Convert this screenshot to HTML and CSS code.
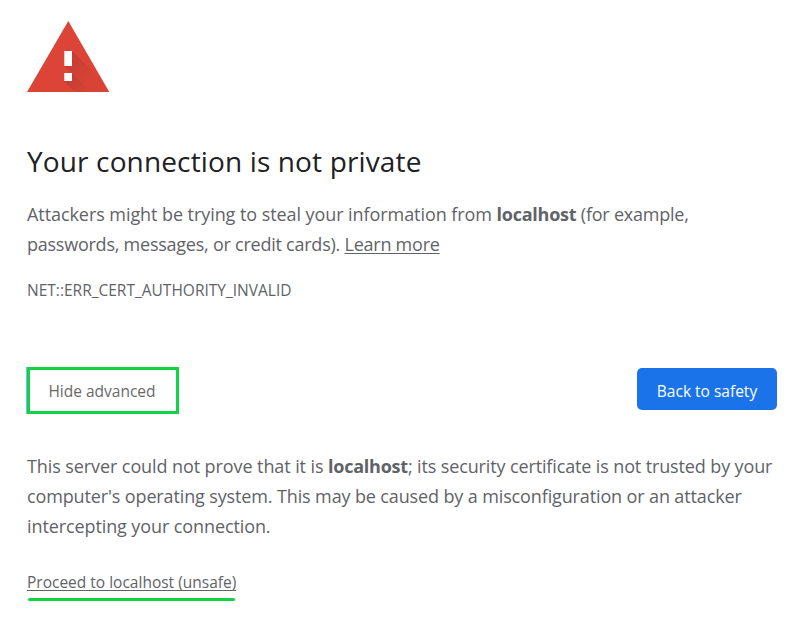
FILE: index.html
```html
<!DOCTYPE html>
<html lang="en">
<head>
<meta charset="utf-8">
<title>Privacy error</title>
<link rel="stylesheet" href="styles.css">
</head>
<body>
<main class="page">
  <svg class="warning-icon" width="84" height="72" viewBox="0 0 84 72" aria-hidden="true">
    <defs>
      <linearGradient id="shade" x1="42" y1="36" x2="66" y2="60" gradientUnits="userSpaceOnUse">
        <stop offset="0" stop-color="#b93a30" stop-opacity=".7"/>
        <stop offset="1" stop-color="#c53b30" stop-opacity=".1"/>
      </linearGradient>
      <linearGradient id="shade-dot" x1="41" y1="56" x2="58" y2="73" gradientUnits="userSpaceOnUse">
        <stop offset="0" stop-color="#b93a30" stop-opacity=".8"/>
        <stop offset="1" stop-color="#c53b30" stop-opacity=".2"/>
      </linearGradient>
      <clipPath id="tri"><path d="M41.300 0 82.300 71H0z"/></clipPath>
    </defs>
    <path fill="#db4437" d="M41.300 0 82.300 71H0z"/>
    <g clip-path="url(#tri)">
      <path fill="url(#shade)" d="M45 30 86 71H64L37 45z"/>
      <path fill="url(#shade-dot)" d="M45 52 64 71H48L37 60z"/>
    </g>
    <path fill="#fff" d="M37.300 30h7.700v15h-7.700zM37.300 52h7.700v8h-7.700z"/>
  </svg>
  <h1 class="title">Your connection is not private</h1>
  <p class="text intro"><span class="l1">Attackers might be trying to steal your information from <strong>localhost</strong><span class="l1-end"> (for example,</span></span><br><span class="l2">passwords, messages, or credit cards). <a class="link" href="#">Learn more</a></span></p>
  <p class="code">NET::ERR_CERT_AUTHORITY_INVALID</p>
  <div class="actions">
    <button class="btn details">Hide advanced</button>
    <button class="btn primary">Back to safety</button>
  </div>
  <p class="text more"><span class="l3">This server could not prove that it is <strong>localhost</strong><span class="l3-end">; its security certificate is not trusted by your</span></span><br><span class="l4">computer's operating system. This may be caused by a misconfiguration or an attacker</span><br><span class="l5">intercepting your connection.</span></p>
  <a class="proceed" href="#">Proceed to localhost (unsafe)</a>
  <div class="marker"></div>
</main>
</body>
</html>
```
FILE: styles.css
```css
* { box-sizing: border-box; }
body { margin: 0; background: #fff; color: #5f6368; font-family: "Open Sans", "Noto Sans", sans-serif; }
.page { display: flex; flex-direction: column; align-items: flex-start; padding: 21px 29px 0 27px; white-space: nowrap; }
.warning-icon { display: block; flex: none; }
.title { margin: 48px 0 0; font-size: 28px; line-height: 40px; font-weight: 400; letter-spacing: .14px; color: #202124; }
.text { margin: 0; font-size: 18px; line-height: 30px; }
.l1 { letter-spacing: -.07px; }
.l1-end { letter-spacing: -.22px; }
.l2 { letter-spacing: -.24px; }
.l3 { letter-spacing: -.09px; }
.l3-end { letter-spacing: -.13px; }
.l4 { letter-spacing: -.13px; }
.l5 { letter-spacing: -.1px; }
.intro { margin-top: 18px; }
strong { font-weight: 700; letter-spacing: -.24px; }
.link, .proceed { color: inherit; text-decoration: underline; text-decoration-thickness: 1px; text-underline-offset: 2px; }
.code { margin: 21px 0 0; font-size: 15.5px; line-height: 20px; }
.actions { display: flex; width: 100%; justify-content: space-between; align-items: flex-start; margin-top: 67px; }
.btn { font: inherit; font-size: 15.5px; padding: 0; white-space: nowrap; }
.details { width: 152px; height: 47px; padding: 1px 2px 0 0; color: #696969; background: #fff; border: 3px solid #10d444; box-shadow: -1px 0 0 #8ab4f8; }
.primary { width: 140px; height: 42px; margin-top: 1px; padding-top: 3px; color: #fff; background: #1a73e8; border: 0; border-radius: 5px; }
.more { margin-top: 37px; }
.proceed { margin-top: 31px; font-size: 15.5px; line-height: 20px; }
.marker { width: 207px; height: 3px; margin: 6px 0 0 1px; border-radius: 2px; background: #10d444; }
```
